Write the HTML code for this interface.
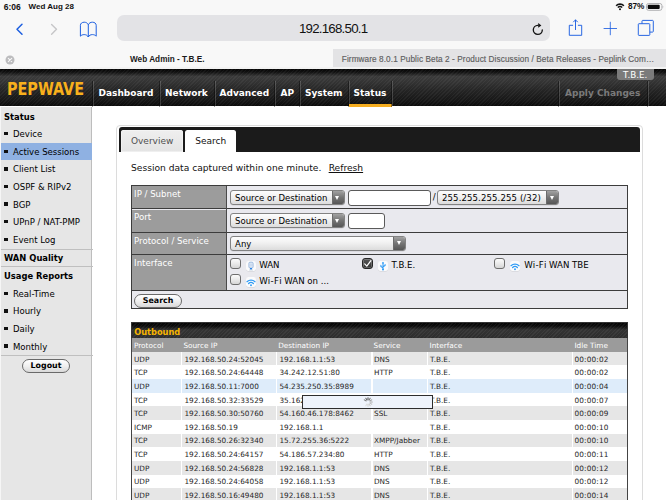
<!DOCTYPE html>
<html><head><meta charset="utf-8"><title>Web Admin - T.B.E.</title>
<style>
*{box-sizing:border-box;margin:0;padding:0}
html,body{width:666px;height:500px;overflow:hidden;background:#fff}
body{position:relative;font-family:"DejaVu Sans","Liberation Sans",sans-serif;font-size:8.4px;color:#000}
.abs{position:absolute}
span.abs{white-space:nowrap}
.ios{font-family:"Liberation Sans",sans-serif}
/* safari chrome */
#chrome{left:0;top:0;width:666px;height:70px;background:#f8f8f8}
#tabline{left:0;top:67.3px;width:666px;height:2px;background:#f3f3f3}
#urlbar{left:117px;top:15.4px;width:433px;height:26px;background:#e3e3e6;border-radius:7px}
#tab2{left:333.2px;top:48.6px;width:333px;height:18.7px;background:#e3e3e5}
.st{font-weight:bold;font-size:8.2px;color:#111;line-height:10px;top:2px}
/* header */
#hdr{left:0;top:69.3px;width:666px;height:37.2px;background:
 repeating-linear-gradient(135deg,rgba(255,255,255,.045) 0 1px,rgba(0,0,0,0) 1px 2.6px),
 linear-gradient(#050505 0,#111 3px,#3b3b3b 7.5px,#353535 12px,#242424 22px,#181818 31px,#0b0b0b 37px)}
.nav{top:82.8px;height:20px;line-height:20px;color:#fff;font-weight:bold;font-size:9px}
.sep{top:81px;width:2px;height:25.5px;background:linear-gradient(90deg,rgba(0,0,0,.4) 0 1px,rgba(255,255,255,.17) 1px 2px)}
/* sidebar */
#side{left:0;top:106.5px;width:92.3px;height:394px;background:#e6e6e6;border-right:1px solid #bdbdbd;border-left:1px solid #f6f6f6}
.sh{left:3px;font-weight:bold;font-size:8.4px;line-height:12px}
.si{left:12px;font-size:8.55px;line-height:12px}
.bul{left:3.3px;width:3.4px;height:3.4px;background:#111}
.hr{left:0;width:91.5px;height:1px;background:#bfbfbf}
/* content */
#panel{left:115.7px;top:124.5px;width:527px;height:400px;border:1px solid #dcdcdc;border-radius:4px;background:#fff}
#tabbar{left:118.7px;top:127px;width:521.6px;height:25px;background:#1b1b1b;border-radius:3px 3px 0 0}
.tab{top:130px;height:22px;border-radius:2.5px 2.5px 0 0;font-size:9px;line-height:22px;text-align:center}
#form{left:131px;top:185.3px;width:497.4px;height:123.6px;background:#e9e9ee;border:1px solid #3c3c3c}
.lab{left:0;width:94px;background:#9c9c9c;color:#fff;font-size:8.6px}
.lab span{left:2.1px;top:1.5px;line-height:12px}
.hl1{left:0;width:495.4px;height:1.2px;background:#3c3c3c}
.sel{height:14.9px;border:1px solid #828282;box-shadow:0 .5px 0 rgba(0,0,0,.12);border-radius:3px;background:linear-gradient(#fdfdfd,#f1f1f1 45%,#dcdcdc);font-size:8.52px;line-height:13px;overflow:hidden}
.sel span{left:3.8px;top:.7px}
.sel i{position:absolute;right:0;top:0;width:12px;height:13px;background:linear-gradient(#a2a2a2,#747474 50%,#565656);border-left:1px solid #6c6c6c}
.sel i:after{content:"";position:absolute;left:2.5px;top:4.5px;border:2.8px solid transparent;border-top:4.2px solid #fff;border-bottom:0}
.inp{height:15.8px;border:1px solid #5a5a5a;border-radius:3px;background:#fff}
.cb{width:11px;height:11px;border:1.1px solid #6e6e6e;border-radius:3px;background:linear-gradient(#fbfbfb,#ececec 45%,#d6d6d6)}
.cb.on{background:linear-gradient(#585858,#333);border-color:#262626;box-shadow:inset 0 0 0 .8px rgba(255,255,255,.28)}
.ico{width:10.2px;height:10px;border-radius:2.5px;background:#fbfbfc;box-shadow:0 .5px .5px rgba(0,0,0,.12)}
.il{font-size:8.6px;line-height:12px}
.btn{border:1px solid #6a6a6a;border-radius:8px;background:linear-gradient(#fff,#f0f0f0 50%,#d9d9d9);font-weight:bold;text-align:center}
/* table */
#ohdr{left:131px;top:322.2px;width:497.4px;height:15.8px;border:1px solid #333;border-bottom:0;background:
 repeating-linear-gradient(135deg,rgba(255,255,255,.05) 0 1px,rgba(0,0,0,0) 1px 2.6px),
 linear-gradient(#050505 0,#0c0c0c 3px,#333 7px,#2d2d2d 15px)}
#ohdr span{left:2.2px;top:3px;color:#f7b500;font-weight:bold;font-size:8.25px;line-height:12px}
#chdr{left:131.5px;top:337.8px;width:496.4px;height:14px;background:#9b9b9b;color:#fff;font-size:7.3px}
#chdr span{top:3.5px;line-height:10px}
.r{left:131.5px;width:496.4px;height:13.75px;font-size:7.3px}
.r.g{background:linear-gradient(90deg,#e6e6e6 0 49.5px,#fff 49.5px 50.5px,#e6e6e6 50.5px 144.5px,#fff 144.5px 145.5px,#e6e6e6 145.5px 239.5px,#fff 239.5px 240.5px,#e6e6e6 240.5px 295px,#fff 295px 296px,#e6e6e6 296px 440px,#fff 440px 441px,#e6e6e6 441px)}
.r.w{background:#fff}
.r.hl{background:linear-gradient(90deg,#deecfa 0 49.5px,#fff 49.5px 50.5px,#deecfa 50.5px 144.5px,#fff 144.5px 145.5px,#deecfa 145.5px 239.5px,#fff 239.5px 240.5px,#deecfa 240.5px 295px,#fff 295px 296px,#deecfa 296px 440px,#fff 440px 441px,#deecfa 441px)}
.c{top:2.8px;line-height:10px;color:#262626}
.c.t{letter-spacing:.17px}
#overlay{left:302.2px;top:394.5px;width:131.3px;height:14px;border:1.1px solid #2d2d2d;background:#eef3fb}
#tblborder{left:131px;top:337.8px;width:497.4px;height:170px;border-left:1px solid #444;border-right:1px solid #444}

</style></head><body>
<div id="chrome" class="abs ios">
 <span class="abs st" style="left:3.8px;font-size:8.5px">6:06</span>
 <span class="abs st" style="left:28.6px;font-size:8px">Wed Aug 28</span>
 <svg class="abs" style="left:615px;top:2px" width="10" height="9" viewBox="0 0 10 9" fill="none" stroke="#111" stroke-width="1.55" stroke-linecap="butt"><path d="M1.1 3.7a5.6 5.6 0 0 1 7.8 0"/><path d="M2.8 5.5a3.2 3.2 0 0 1 4.4 0"/><circle cx="5" cy="7.3" r="1" fill="#111" stroke="none"/></svg>
 <span class="abs st" style="left:628px">87%</span>
 <svg class="abs" style="left:646.3px;top:2.9px" width="18" height="8" viewBox="0 0 18 8"><rect x=".5" y=".5" width="15.4" height="6.8" rx="2" fill="none" stroke="#a9a9ab" stroke-width=".9"/><rect x="1.7" y="1.7" width="12" height="4.4" rx="1" fill="#0c0c0c"/><path d="M16.7 2.8v2.2c.8-.2.8-2 0-2.2z" fill="#a9a9ab"/></svg>
 <svg class="abs" style="left:14px;top:22px" width="11" height="14" viewBox="0 0 11 14" fill="none" stroke="#1d5fe0" stroke-width="1.5" stroke-linecap="round" stroke-linejoin="round"><path d="M8 2.3 3 7.3l5 5"/></svg>
 <svg class="abs" style="left:48px;top:22px" width="11" height="14" viewBox="0 0 11 14" fill="none" stroke="#c6c6c8" stroke-width="1.4" stroke-linecap="round" stroke-linejoin="round"><path d="M3.6 2.4 8.5 7.3l-4.9 4.9"/></svg>
 <svg class="abs" style="left:79px;top:20.7px" width="20" height="18" viewBox="0 0 20 18" fill="none" stroke="#1d5fe0" stroke-width="1" stroke-linejoin="round"><path d="M9.3 3.8C8.6 2 6.9 1.2 5.2 1.2 3 1.2 1.4 2.5 1.4 4.3V15.2C2.4 14 3.9 13.6 5.2 13.6c1.8 0 3.3.8 4.1 2.4.8-1.6 2.3-2.4 4.1-2.4 1.3 0 2.8.4 3.8 1.6V4.3c0-1.8-1.6-3.1-3.8-3.1-1.7 0-3.4.8-4.1 2.6zM9.3 3.8V16"/></svg>
 <div id="urlbar" class="abs"></div>
 <span class="abs" style="left:299px;top:21.3px;font-size:13.3px;line-height:16px;letter-spacing:-.78px;color:#111">192.168.50.1</span>
 <svg class="abs" style="left:531px;top:21.5px" width="13" height="14" viewBox="0 0 13 14" fill="none" stroke="#141414" stroke-width="1.35" stroke-linecap="round"><path d="M11.3 8A4.5 4.5 0 1 1 6.8 3.4"/><path d="M7.2 1.1v4.6l3.2-2.300z" fill="#141414" stroke="none"/></svg>
 <svg class="abs" style="left:567px;top:18px" width="17" height="19" viewBox="0 0 17 19" fill="none" stroke="#1d5fe0" stroke-width=".95" stroke-linecap="round" stroke-linejoin="round"><path d="M5.7 7.3H2.3v10h12.4v-10h-3.4"/><path d="M8.5 11.6V2M6.5 3.9 8.5 1.9l2 2"/></svg>
 <svg class="abs" style="left:603px;top:21px" width="15" height="15" viewBox="0 0 15 15" fill="none" stroke="#1d5fe0" stroke-width=".85"><path d="M7.3.8v13.4M.6 7.5h13.4"/></svg>
 <svg class="abs" style="left:637px;top:19px" width="18" height="18" viewBox="0 0 18 18" fill="none" stroke="#1d5fe0" stroke-width=".95" stroke-linejoin="round"><rect x="1.3" y="4.7" width="11.5" height="11.7" rx=".7"/><path d="M5 4.7V2.1c0-.4.3-.7.7-.7h9.9c.4 0 .7.3.7.7v10.3c0 .4-.3.7-.7.7h-2.8"/></svg>
 <svg class="abs" style="left:5.2px;top:54.6px" width="10" height="10" viewBox="0 0 10 10"><circle cx="5" cy="5" r="4.5" fill="#bcbcbe"/><path d="M3.3 3.3l3.4 3.4M6.7 3.3 3.3 6.7" stroke="#f8f8f8" stroke-width="1.1" stroke-linecap="round"/></svg>
 <span class="abs" style="left:130px;top:53.5px;font-size:8.2px;line-height:11px;font-weight:bold;color:#1a1a1a;letter-spacing:.02px">Web Admin - T.B.E.</span>
 <div id="tab2" class="abs"></div><div id="tabline" class="abs"></div>
 <span class="abs" style="left:341.8px;top:53.5px;font-size:8.2px;line-height:11px;color:#5e5e60;-webkit-text-stroke:.15px #5e5e60;letter-spacing:.1px">Firmware 8.0.1 Public Beta 2 - Product Discussion / Beta Releases - Peplink Com…</span>
</div>
<div id="hdr" class="abs"></div>
<span class="abs" id="logo" style="left:7.2px;top:77.7px;font-family:'DejaVu Sans Condensed','DejaVu Sans',sans-serif;font-size:17.3px;line-height:22px;font-weight:bold;color:#f8b01c;transform-origin:0 0;transform:scaleX(.925)">PEPWAVE</span>
<div class="abs sep" style="left:91.5px"></div>
<span class="abs nav" style="left:98.5px">Dashboard</span>
<div class="abs sep" style="left:158.5px"></div>
<span class="abs nav" style="left:165px">Network</span>
<div class="abs sep" style="left:213.8px"></div>
<span class="abs nav" style="left:219.5px">Advanced</span>
<div class="abs sep" style="left:273.5px"></div>
<span class="abs nav" style="left:280.5px">AP</span>
<div class="abs sep" style="left:298.5px"></div>
<span class="abs nav" style="left:305px">System</span>
<div class="abs sep" style="left:347.8px"></div>
<span class="abs nav" style="left:353.5px">Status</span>
<div class="abs" style="left:348.6px;top:103.6px;width:43.2px;height:3px;background:#f5ad1f"></div>
<div class="abs sep" style="left:391px"></div>
<div class="abs sep" style="left:557.5px"></div>
<span class="abs nav" style="left:565px;color:#7a7a7a">Apply Changes</span>
<div class="abs sep" style="left:646.5px"></div>
<div class="abs" style="left:617px;top:69.3px;width:37px;height:11px;background:#7b7b7b;border-radius:0 0 3px 3px"></div>
<span class="abs" style="left:623.1px;top:69.7px;font-size:8.75px;line-height:11px;color:#fff">T.B.E.</span>

<div id="side" class="abs">
 <span class="abs sh" style="top:4.3px">Status</span>
 <div class="abs" style="left:0;top:36px;width:91px;height:17px;background:#8fb1e2"></div>
 <div class="abs hr" style="top:142px"></div>
 <span class="abs sh" style="top:145.6px">WAN Quality</span>
 <div class="abs hr" style="top:159.7px"></div>
 <span class="abs sh" style="top:163.5px">Usage Reports</span>
 <div class="abs hr" style="top:248.8px"></div>
 <div class="abs btn" style="left:21px;top:252.7px;width:48px;height:13.6px;font-size:7.9px;line-height:11.6px">Logout</div>
 <div class="abs bul" style="top:25.6px"></div><span class="abs si" style="top:21.7px">Device</span>
 <div class="abs bul" style="top:43.1px"></div><span class="abs si" style="top:39.2px">Active Sessions</span>
 <div class="abs bul" style="top:60.7px"></div><span class="abs si" style="top:56.8px">Client List</span>
 <div class="abs bul" style="top:78.4px"></div><span class="abs si" style="top:74.5px">OSPF &amp; RIPv2</span>
 <div class="abs bul" style="top:95.9px"></div><span class="abs si" style="top:92.0px">BGP</span>
 <div class="abs bul" style="top:113.6px"></div><span class="abs si" style="top:109.7px">UPnP / NAT-PMP</span>
 <div class="abs bul" style="top:131.3px"></div><span class="abs si" style="top:127.4px">Event Log</span>
 <div class="abs bul" style="top:185.2px"></div><span class="abs si" style="top:181.3px">Real-Time</span>
 <div class="abs bul" style="top:202.7px"></div><span class="abs si" style="top:198.8px">Hourly</span>
 <div class="abs bul" style="top:220.3px"></div><span class="abs si" style="top:216.4px">Daily</span>
 <div class="abs bul" style="top:237.9px"></div><span class="abs si" style="top:234.0px">Monthly</span>
</div>

<div id="panel" class="abs"></div>
<div id="tabbar" class="abs"></div>
<div class="abs tab" style="left:121.3px;width:61.7px;background:linear-gradient(#efefef,#e4e4e4);color:#505050;box-shadow:inset 0 0 0 .5px #fafafa">Overview</div>
<div class="abs tab" style="left:185px;width:51.4px;height:23px;background:#fff;color:#111">Search</div>
<span class="abs" style="left:131px;top:162px;font-size:9.13px;line-height:12px;color:#111">Session data captured within one minute.&nbsp; <u style="margin-left:1.5px">Refresh</u></span>
<div id="form" class="abs">
 <div class="abs lab" style="top:0;height:22.5px"><span class="abs">IP / Subnet</span></div>
 <div class="abs hl1" style="top:22px"></div>
 <div class="abs lab" style="top:23.5px;height:22.5px"><span class="abs">Port</span></div>
 <div class="abs hl1" style="top:45.8px"></div>
 <div class="abs lab" style="top:47px;height:21px"><span class="abs">Protocol / Service</span></div>
 <div class="abs hl1" style="top:67.9px"></div>
 <div class="abs lab" style="top:69.1px;height:34.8px"><span class="abs">Interface</span></div>
 <div class="abs hl1" style="top:103.8px"></div>
 <div class="abs" style="left:94px;top:0;width:1px;height:103.8px;background:#4a4a4a"></div>

 <div class="abs sel" style="left:98.3px;top:3.8px;width:114.6px"><span class="abs">Source or Destination</span><i></i></div>
 <div class="abs inp" style="left:216px;top:3.6px;width:83.3px"></div>
 <span class="abs" style="left:300.8px;top:5px;font-size:8.6px;line-height:12px">/</span>
 <div class="abs sel" style="left:305.2px;top:3.8px;width:122.3px"><span class="abs" style="letter-spacing:.13px">255.255.255.255 (/32)</span><i></i></div>

 <div class="abs sel" style="left:98.3px;top:27.2px;width:114.6px"><span class="abs">Source or Destination</span><i></i></div>
 <div class="abs inp" style="left:216px;top:27px;width:37px"></div>

 <div class="abs sel" style="left:98.3px;top:49.7px;width:176px"><span class="abs">Any</span><i></i></div>

 <div class="abs cb" style="left:97.7px;top:71.9px"></div>
 <div class="abs ico" style="left:113.6px;top:74.8px"><svg class="abs" style="left:0;top:0" width="10" height="10" viewBox="0 0 10 10"><rect x="2.9" y="1.2" width="4.2" height="5.8" rx="1.1" fill="#e4edf8" stroke="#86a9d6" stroke-width=".75"/><path d="M4.3 2.5v3M5.7 2.5v3" stroke="#a9c3e4" stroke-width=".5"/><path d="M4 7h2v1.6H4z" fill="#2f86e6"/><path d="M3 9h4" stroke="#9fb4cc" stroke-width=".5"/></svg></div>
 <span class="abs il" style="left:127.2px;top:73px">WAN</span>

 <div class="abs cb on" style="left:229.7px;top:71.9px"><svg class="abs" style="left:-1.1px;top:-1.1px" width="11" height="11" viewBox="0 0 11 11" fill="none" stroke="#fff" stroke-width="1.25" stroke-linecap="round" stroke-linejoin="round"><path d="M2.7 5.9l2.1 2.2L8.9 2.7"/></svg></div>
 <div class="abs ico" style="left:245.7px;top:74.8px"><svg class="abs" style="left:0;top:0" width="10" height="10" viewBox="0 0 10 10" fill="none" stroke="#2f9bf5" stroke-width="1.05" stroke-linecap="round" stroke-linejoin="round"><path d="M5 1.5v7M5 6.9 2.9 5.5V4.2M5 5.8l2.1-1.3V3.4"/><circle cx="5" cy="8.6" r="1" fill="#2f9bf5" stroke="none"/><path d="M3.9 2.4 5 .7l1.1 1.7z" fill="#2f9bf5" stroke="none"/></svg></div>
 <span class="abs il" style="left:259.5px;top:73px">T.B.E.</span>

 <div class="abs cb" style="left:361.8px;top:71.9px"></div>
 <div class="abs ico" style="left:377.8px;top:74.8px"><svg class="abs" style="left:0;top:0" width="10" height="10" viewBox="0 0 10 10" fill="none" stroke="#319cf5" stroke-width="1.25" stroke-linecap="round"><path d="M1 4.7a5.7 5.7 0 0 1 8 0"/><path d="M2.6 6.5a3.4 3.4 0 0 1 4.8 0"/><circle cx="5" cy="8.3" r=".95" fill="#319cf5" stroke="none"/></svg></div>
 <span class="abs il" style="left:392.2px;top:73px"><span style="letter-spacing:.25px">Wi-F</span>i WAN TBE</span>

 <div class="abs cb" style="left:97.7px;top:88.1px"></div>
 <div class="abs ico" style="left:113.6px;top:91px"><svg class="abs" style="left:0;top:0" width="10" height="10" viewBox="0 0 10 10" fill="none" stroke="#319cf5" stroke-width="1.25" stroke-linecap="round"><path d="M1 4.7a5.7 5.7 0 0 1 8 0"/><path d="M2.6 6.5a3.4 3.4 0 0 1 4.8 0"/><circle cx="5" cy="8.3" r=".95" fill="#319cf5" stroke="none"/></svg></div>
 <span class="abs il" style="left:127.2px;top:89.2px"><span style="letter-spacing:.3px">Wi-F</span>i WAN on ...</span>

 <div class="abs btn" style="left:2.4px;top:107.6px;width:47.4px;height:13.8px;font-size:7.9px;line-height:11.6px">Search</div>
</div>
<div id="ohdr" class="abs"><span class="abs">Outbound</span></div>
<div id="chdr" class="abs">
 <span class="abs" style="left:2.5px">Protocol</span>
 <span class="abs" style="left:51.9px">Source IP</span>
 <span class="abs" style="left:146.7px">Destination IP</span>
 <span class="abs" style="left:242.1px">Service</span>
 <span class="abs" style="left:298px">Interface</span>
 <span class="abs" style="left:442.9px">Idle Time</span>
</div>

<div id="rows">
<div class="abs r g" style="top:351.8px"><span class="abs c" style="left:2.5px">UDP</span><span class="abs c" style="left:52.9px">192.168.50.24:52045</span><span class="abs c" style="left:147.9px">192.168.1.1:53</span><span class="abs c" style="left:242.5px">DNS</span><span class="abs c" style="left:298.6px">T.B.E.</span><span class="abs c t" style="left:442.9px">00:00:02</span></div>
<div class="abs r w" style="top:365.4px"><span class="abs c" style="left:2.5px">TCP</span><span class="abs c" style="left:52.9px">192.168.50.24:64448</span><span class="abs c" style="left:147.9px">34.242.12.51:80</span><span class="abs c" style="left:242.5px">HTTP</span><span class="abs c" style="left:298.6px">T.B.E.</span><span class="abs c t" style="left:442.9px">00:00:02</span></div>
<div class="abs r hl" style="top:379.1px"><span class="abs c" style="left:2.5px">UDP</span><span class="abs c" style="left:52.9px">192.168.50.11:7000</span><span class="abs c" style="left:147.9px">54.235.250.35:8989</span><span class="abs c" style="left:298.6px">T.B.E.</span><span class="abs c t" style="left:442.9px">00:00:04</span></div>
<div class="abs r w" style="top:392.8px"><span class="abs c" style="left:2.5px">TCP</span><span class="abs c" style="left:52.9px">192.168.50.32:33529</span><span class="abs c" style="left:147.9px">35.162</span><span class="abs c" style="left:298.6px">T.B.E.</span><span class="abs c t" style="left:442.9px">00:00:07</span></div>
<div class="abs r g" style="top:406.4px"><span class="abs c" style="left:2.5px">TCP</span><span class="abs c" style="left:52.9px">192.168.50.30:50760</span><span class="abs c" style="left:147.9px">54.160.46.178:8462</span><span class="abs c" style="left:242.5px">SSL</span><span class="abs c" style="left:298.6px">T.B.E.</span><span class="abs c t" style="left:442.9px">00:00:09</span></div>
<div class="abs r w" style="top:420.1px"><span class="abs c" style="left:2.5px">ICMP</span><span class="abs c" style="left:52.9px">192.168.50.19</span><span class="abs c" style="left:147.9px">192.168.1.1</span><span class="abs c" style="left:298.6px">T.B.E.</span><span class="abs c t" style="left:442.9px">00:00:10</span></div>
<div class="abs r g" style="top:433.7px"><span class="abs c" style="left:2.5px">TCP</span><span class="abs c" style="left:52.9px">192.168.50.26:32340</span><span class="abs c" style="left:147.9px">15.72.255.36:5222</span><span class="abs c" style="left:242.5px">XMPP/Jabber</span><span class="abs c" style="left:298.6px">T.B.E.</span><span class="abs c t" style="left:442.9px">00:00:10</span></div>
<div class="abs r w" style="top:447.4px"><span class="abs c" style="left:2.5px">TCP</span><span class="abs c" style="left:52.9px">192.168.50.24:64157</span><span class="abs c" style="left:147.9px">54.186.57.234:80</span><span class="abs c" style="left:242.5px">HTTP</span><span class="abs c" style="left:298.6px">T.B.E.</span><span class="abs c t" style="left:442.9px">00:00:11</span></div>
<div class="abs r g" style="top:461.0px"><span class="abs c" style="left:2.5px">UDP</span><span class="abs c" style="left:52.9px">192.168.50.24:56828</span><span class="abs c" style="left:147.9px">192.168.1.1:53</span><span class="abs c" style="left:242.5px">DNS</span><span class="abs c" style="left:298.6px">T.B.E.</span><span class="abs c t" style="left:442.9px">00:00:12</span></div>
<div class="abs r w" style="top:474.7px"><span class="abs c" style="left:2.5px">UDP</span><span class="abs c" style="left:52.9px">192.168.50.24:64058</span><span class="abs c" style="left:147.9px">192.168.1.1:53</span><span class="abs c" style="left:242.5px">DNS</span><span class="abs c" style="left:298.6px">T.B.E.</span><span class="abs c t" style="left:442.9px">00:00:12</span></div>
<div class="abs r g" style="top:488.3px"><span class="abs c" style="left:2.5px">UDP</span><span class="abs c" style="left:52.9px">192.168.50.16:49480</span><span class="abs c" style="left:147.9px">192.168.1.1:53</span><span class="abs c" style="left:242.5px">DNS</span><span class="abs c" style="left:298.6px">T.B.E.</span><span class="abs c t" style="left:442.9px">00:00:14</span></div>
</div>
<div id="overlay" class="abs"><svg class="abs" style="left:60px;top:1.5px" width="10" height="10" viewBox="-5 -5 10 10" fill="none" stroke-linecap="round" stroke-width="1.1"><path d="M0-4.3v2" stroke="#555"/><path d="M2.15-3.7l-1 1.7" stroke="#777"/><path d="M3.7-2.15l-1.7 1" stroke="#999"/><path d="M4.3 0h-2" stroke="#aaa"/><path d="M3.7 2.15l-1.7-1" stroke="#bbb"/><path d="M2.15 3.7l-1-1.7" stroke="#ccc"/><path d="M0 4.3v-2" stroke="#d4d4d4"/><path d="M-2.15 3.7l1-1.7" stroke="#ddd"/><path d="M-3.7-2.15l1.7 1" stroke="#777"/><path d="M-2.15-3.7l1 1.7" stroke="#666"/></svg></div>
<div id="tblborder" class="abs"></div>
</body></html>
